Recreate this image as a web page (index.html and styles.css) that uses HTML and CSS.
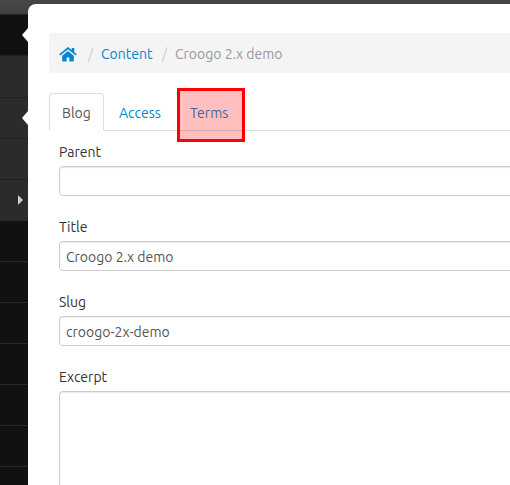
FILE: index.html
```html
<!DOCTYPE html>
<html lang="en">
<head>
<meta charset="utf-8">
<title>Croogo 2.x demo</title>
<link rel="stylesheet" href="styles.css">
</head>
<body>
<div class="layout">
  <nav class="sidebar">
    <div class="item current notch"></div>
    <div class="item sub"></div>
    <div class="item sub notch"></div>
    <div class="item sub"></div>
    <div class="item sub more"></div>
    <div class="item"></div>
    <div class="item"></div>
    <div class="item"></div>
    <div class="item"></div>
    <div class="item"></div>
    <div class="item"></div>
    <div class="item"></div>
  </nav>
  <main class="content">
    <div class="breadcrumb">
      <svg class="home" viewBox="0 0 18 15" width="18" height="15"><path d="M9 3.900 3.200 8.700v5.100c0 .4.300.7.700.7h3.700v-4h2.800v4h3.700c.4 0 .7-.3.700-.7V8.700z"/><path d="M17.500 7.100 15.300 5.200V1h-2.500v2.100L10 .7c-.6-.5-1.400-.5-2 0L.5 7.100c-.2.2-.2.4 0 .6l.5.5c.2.2.4.2.6 0L9 2.200l7.400 6c.2.2.4.2.6 0l.5-.5c.2-.2.2-.4 0-.6z"/></svg>
      <span class="slash">/</span>
      <a class="crumb">Content</a>
      <span class="slash">/</span>
      <span class="here">Croogo 2.x demo</span>
    </div>
    <div class="tabs">
      <a class="tab active">Blog</a>
      <a class="tab access">Access</a>
      <a class="tab terms">Terms<span class="highlight"></span></a>
    </div>
    <form class="fields">
      <label for="parent">Parent</label>
      <input id="parent" type="text">
      <label for="title">Title</label>
      <input id="title" type="text" value="Croogo 2.x demo">
      <label for="slug">Slug</label>
      <input id="slug" type="text" value="croogo-2x-demo">
      <label for="excerpt">Excerpt</label>
      <textarea id="excerpt"></textarea>
    </form>
  </main>
</div>
</body>
</html>
```
FILE: styles.css
```css
* { box-sizing: border-box; }
body {
  margin: 0;
  overflow: hidden;
  background: #444;
  color: #333;
  font: 14px/20px Ubuntu, "Noto Sans", sans-serif;
}
.layout { display: flex; height: 485px; overflow: hidden; }
.sidebar { flex: 0 0 28px; padding-top: 14px; background: linear-gradient(#494949, #404040 14px, #222 14px); }
.item { position: relative; height: 41px; background: #111; border-top: 1px solid #292929; }
.current { border-top-color: #222; }
.sub { background: #2b2b2b; border-top-color: #202020; }
.current + .sub { height: 42px; }
.notch::after {
  content: "";
  position: absolute;
  right: 0;
  top: 13px;
  border: 7px solid transparent;
  border-right: 6px solid #fff;
  border-left: 0;
}
.more::after {
  content: "";
  position: absolute;
  right: 5px;
  top: 15px;
  border: 5px solid transparent;
  border-left-color: #ccc;
  border-right: 0;
}
.content {
  flex: 0 0 500px;
  margin-top: 4px;
  padding: 29px 0 0 21px;
  background: #fff;
  border-radius: 8px 0 0 0;
}
.breadcrumb {
  display: flex;
  align-items: center;
  height: 40px;
  padding: 2px 0 0 10px;
  background: #f4f4f4;
  border-radius: 4px;
}
.home { fill: #08c; margin-right: 11px; }
.slash { width: 13px; color: #ccc; }
.crumb { width: 61px; color: #08c; }
.here { color: #999; }
.tabs { display: flex; height: 38px; margin-top: 20px; border-bottom: 1px solid #ddd; }
.tab { position: relative; height: 38px; padding: 10px 0 8px; color: #08c; }
.active {
  width: 55px;
  padding: 9px 0 8px 12px;
  border: 1px solid #ddd;
  border-bottom-color: #fff;
  border-radius: 4px 4px 0 0;
  color: #555;
}
.access { width: 71px; padding-left: 15px; }
.terms { width: 55px; padding-left: 15px; }
.highlight {
  position: absolute;
  left: 2px;
  top: -5px;
  width: 68px;
  height: 54px;
  border: 3px solid #f00;
  background: rgba(255, 0, 0, .25);
}
.fields { padding: 11px 0 0 10px; }
label { display: block; }
input, textarea {
  display: block;
  width: 520px;
  height: 30px;
  margin: 4px 0 21px;
  padding: 5px 6px 3px;
  border: 1px solid #ccc;
  border-radius: 4px;
  background: #fff;
  box-shadow: inset 0 1px 1px rgba(0, 0, 0, .075);
  color: #555;
  font: inherit;
}
textarea { height: 150px; margin-bottom: 0; resize: none; }
```
